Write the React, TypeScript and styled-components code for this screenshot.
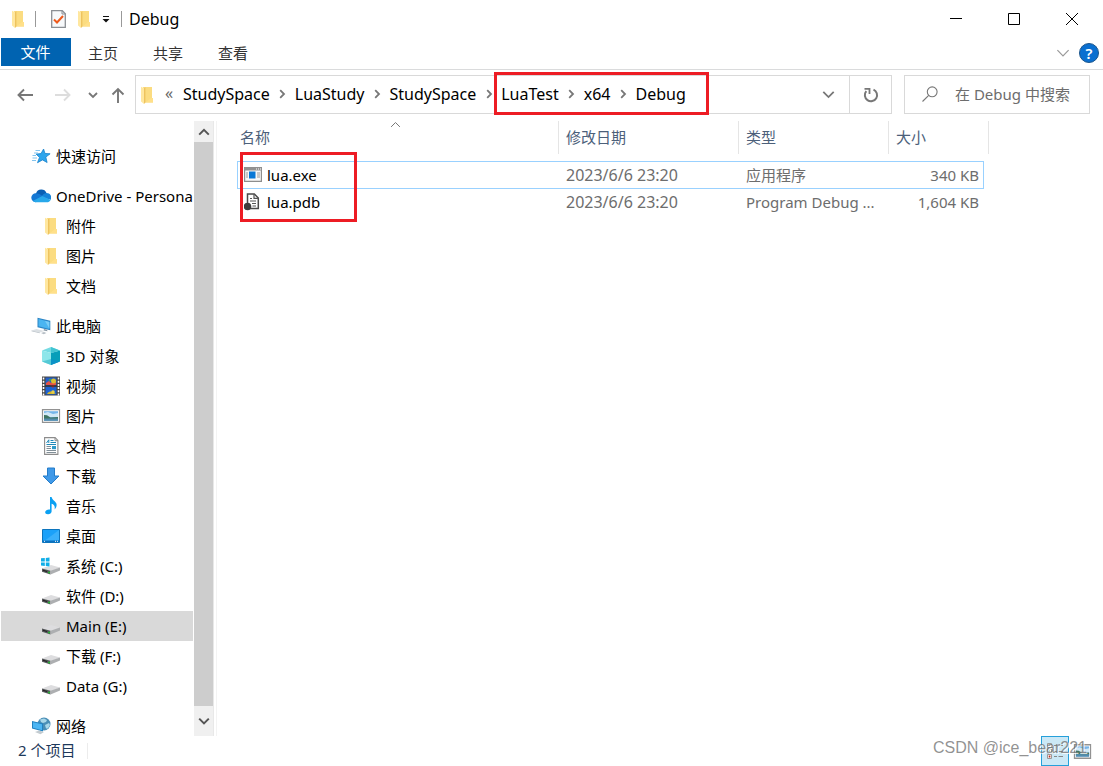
import React from 'react';
import styled, { createGlobalStyle } from 'styled-components';

const GlobalStyle = createGlobalStyle`
  *, *::before, *::after { box-sizing: border-box; }
  body {
    margin: 0;
    background: #fff;
    color: #000;
    font-family: "Noto Sans", "Noto Sans CJK SC", sans-serif;
    font-size: 15px;
    line-height: 20px;
  }
  button, input { font: inherit; color: inherit; }
  svg { display: block; flex: none; }
`;

/* ---------- icons ---------- */

const FolderIcon = () => (
  <svg width="12" height="18" viewBox="0 0 12 18" aria-hidden="true">
    <path d="M2 1h9v13h1v2.5H4z" fill="#fbdc81" />
    <path d="M10 12h2v4.5H4.500z" fill="#ffe08a" />
    <path d="M0 .8l3 1.400V18L0 15.600z" fill="#ffe79f" />
    <path d="M3 2.200L4.400 1v15.500L3 18z" fill="#eec35f" />
  </svg>
);

const CheckDocIcon = () => (
  <svg width="15" height="18" viewBox="0 0 15 18" aria-hidden="true">
    <path d="M.7.700h10.600l3 3v13.600H.7z" fill="#f7f9fb" stroke="#8b8f94" strokeWidth="1.300" />
    <path d="M11 1v3h3.500" fill="none" stroke="#8b8f94" />
    <path d="M3 9.500l3 3 6-6.500" fill="none" stroke="#ee5a1c" strokeWidth="2" />
  </svg>
);

const QuickMenuIcon = () => (
  <svg width="8" height="8" viewBox="0 0 8 8" aria-hidden="true">
    <path d="M1 1h6v1H1zM.5 4h7L4 7.500z" fill="#111" />
  </svg>
);

const MinimizeIcon = () => (
  <svg width="12" height="12" viewBox="0 0 12 12" aria-hidden="true"><path d="M0 5.500h12" stroke="#000" /></svg>
);
const MaximizeIcon = () => (
  <svg width="12" height="12" viewBox="0 0 12 12" aria-hidden="true"><path d="M.5.500h11v11H.5z" fill="none" stroke="#000" /></svg>
);
const CloseIcon = () => (
  <svg width="12" height="12" viewBox="0 0 12 12" aria-hidden="true"><path d="M0 0l12 12M12 0L0 12" stroke="#000" /></svg>
);

const Chevron = ({ dir, size = 10, color = '#777', weight = 1.8 }: { dir: 'up' | 'down' | 'right'; size?: number; color?: string; weight?: number }) => {
  const paths = { up: 'M1 7.200L5 3.200l4 4', down: 'M1 3l4 4 4-4', right: 'M3.200 1.200L7 5 3.200 8.800' };
  return (
    <svg width={size} height={size} viewBox="0 0 10 10" aria-hidden="true">
      <path d={paths[dir]} fill="none" stroke={color} strokeWidth={weight * 10 / size} />
    </svg>
  );
};

const ArrowIcon = ({ dir, color }: { dir: 'left' | 'right' | 'up'; color: string }) => {
  const paths = {
    left: 'M16 8H1.500M7 2.500L1.500 8 7 13.500',
    right: 'M0 8h14.500M9 2.500L14.500 8 9 13.500',
    up: 'M8 16V2M2.500 7.500L8 2l5.500 5.500',
  };
  return (
    <svg width="16" height="16" viewBox="0 0 16 16" aria-hidden="true">
      <path d={paths[dir]} fill="none" stroke={color} strokeWidth="1.900" />
    </svg>
  );
};

const RefreshIcon = () => (
  <svg width="16" height="16" viewBox="0 0 16 16" aria-hidden="true">
    <path d="M10.500 2.600A6.100 6.100 0 1 1 3.300 4.200" fill="none" stroke="#777" strokeWidth="2" />
    <path d="M1.500 1.900h5v5" fill="none" stroke="#777" strokeWidth="1.800" />
  </svg>
);

const SearchIcon = () => (
  <svg width="16" height="16" viewBox="0 0 16 16" aria-hidden="true">
    <circle cx="10.200" cy="5.800" r="4.900" fill="none" stroke="#777" strokeWidth="1.100" />
    <path d="M6.700 9.300L.5 15.500" stroke="#777" strokeWidth="1.100" />
  </svg>
);

const StarIcon = () => (
  <svg width="20" height="16" viewBox="0 0 20 16" aria-hidden="true">
    <path d="M12.600 1l1.300 4.400 5.200.4-4.300 3.300 1.300 5.400-4.600-2.600-5 2.800 2-5.300-3.400-3.300 4.900-.5z" fill="#2fa5ec" stroke="#1781cc" strokeWidth=".8" />
    <path d="M4.500 2.500h4.500M3 5h4M1.500 7.500h3.500M1.500 10h4.500M1 12.500h4" stroke="#75bdec" strokeWidth=".9" />
  </svg>
);

const OneDriveIcon = () => (
  <svg width="20" height="14" viewBox="0 0 20 14" aria-hidden="true">
    <path d="M5 4.500A5.600 5.600 0 0 1 15.500 4l-3 5-8-4z" fill="#0a5fb4" />
    <path d="M4.700 13.200A4.500 4.500 0 0 1 4.900 4.200c2.300 0 4 1 6.600 2.800L5 13.200z" fill="#1478d4" />
    <path d="M11 6.800c1.600-2 3-2.900 4.700-2.800a4.600 4.600 0 0 1 4 6.800L13 9z" fill="#1683d8" />
    <path d="M1.800 12.100L11.300 7l8.300 3.900c-.8 1.500-2.100 2.300-3.800 2.300h-11c-1.200 0-2.200-.4-3-1.100z" fill="#28a8ea" />
  </svg>
);

const ComputerIcon = () => (
  <svg width="20" height="18" viewBox="0 0 20 18" aria-hidden="true">
    <path d="M6.500.800l12.800 3v9.400l-12.800-3z" fill="#2b84c4" />
    <path d="M7.500 2.100l10.900 2.600v7.200L7.500 9.300z" fill="#4bb5f1" />
    <path d="M14 3.900l4.400 1v6.500z" fill="#7bcdf7" />
    <path d="M13 12l3 .7.500 1.500-4-.7z" fill="#8998a5" />
    <path d="M.5 13.500l5-1.500 8 2-4.700 1.500z" fill="#dbe0e4" />
    <path d="M.5 13.500l8.300 2v.8L.5 14.300zM10 16l3-1 2.500.9-2.800 1.300z" fill="#b7bfc6" />
  </svg>
);

const CubeIcon = () => (
  <svg width="20" height="18" viewBox="0 0 20 18" aria-hidden="true">
    <path d="M1 3.500L10 0l9 3.500L10 6z" fill="#75dbe3" />
    <path d="M1 3.500L10 6v12l-9-3.500z" fill="#8ee6ea" />
    <path d="M10 6l9-2.500v11L10 18z" fill="#079eb9" />
    <path d="M10 0l9 3.500L10 6z" fill="#42c4d2" />
    <path d="M1 14.500L10 12v6z" fill="#55c9d5" />
    <path d="M10 12l9 2.500-9 3.500z" fill="#0b92c7" />
  </svg>
);

const FilmIcon = () => (
  <svg width="20" height="20" viewBox="0 0 20 20" aria-hidden="true">
    <path d="M1 .5h18v19H1z" fill="#454545" />
    <path d="M4.500 1.500h11v8h-11z" fill="#2460c5" />
    <path d="M4.500 10.500h11v8h-11z" fill="#1c62d3" />
    <path d="M5 7l3-2 2 2 5-1v3H5z" fill="#e65245" />
    <circle cx="12.500" cy="5" r="2.500" fill="#d9be31" />
    <path d="M9 9l5 0-2 3z" fill="#bd342b" />
    <path d="M6 18c1-2 3-3 5-2l4 2z" fill="#d4b72f" />
    <circle cx="12" cy="16" r="1.800" fill="#e9cf45" />
    <path d="M8 3h2v2H8z" fill="#38a256" />
    <path d="M4 10h12" stroke="#282828" />
    <path d="M2.500 1.500v18M17.500 1.500v18" stroke="#fff" strokeWidth="1.600" strokeDasharray="2 1.200" />
  </svg>
);

const PictureIcon = ({ width = 20, height = 14 }: { width?: number; height?: number }) => (
  <svg width={width} height={height} viewBox="0 0 20 14" preserveAspectRatio="none" aria-hidden="true">
    <path d="M1.500.700h17v12.600h-17z" fill="#fff" stroke="#929292" strokeWidth="1.200" />
    <path d="M3 2.200h14v9.600H3z" fill="#75b5e9" />
    <path d="M3 4l4-1 5 2 5-1v4H3z" fill="#d0e8f7" />
    <path d="M3 6l3 .3 3.500 2.200L17 8v2H3z" fill="#3f7563" />
    <path d="M3 9.500h14v2.300H3z" fill="#548cac" />
  </svg>
);

const DocumentIcon = () => (
  <svg width="20" height="18" viewBox="0 0 20 18" aria-hidden="true">
    <path d="M3.600.600h10.500l2.800 2.800v14H3.600z" fill="#fff" stroke="#8c8c8c" strokeWidth="1.100" />
    <path d="M14 .8v2.900h2.800" fill="none" stroke="#8c8c8c" />
    <path d="M5.500 6l2.300-3.200V6M9.500 3.500h3M9.500 5.500h5.500M5.500 7.500H15" fill="none" stroke="#2089b9" />
    <path d="M5.500 9.500H10M5.500 11.500H10M5.500 13.500H15M5.500 15.500H15" stroke="#818f98" />
    <path d="M11 9h4v3.200h-4z" fill="#2f9ac9" />
  </svg>
);

const DownloadIcon = () => (
  <svg width="20" height="18" viewBox="0 0 20 18" aria-hidden="true">
    <path d="M6.500 1h7v8H18l-8 8-8-8h4.500z" fill="#3f99e8" stroke="#247cc9" />
  </svg>
);

const MusicIcon = () => (
  <svg width="20" height="18" viewBox="0 0 20 18" aria-hidden="true">
    <path d="M9 0h1.600c.4 3 4.600 4.500 5 7.400.2 2-.7 3.700-2 5 .6-3-.4-4.800-3-5.600v7.700c0 1.700-2 3-3.800 2.800C5 17.200 4 16.300 4.200 15c.3-1.700 2.600-3 4.800-2.400z" fill="#0ba0f2" />
  </svg>
);

const DesktopIcon = () => (
  <svg width="20" height="14" viewBox="0 0 20 14" aria-hidden="true">
    <path d="M1.500.500h17v13h-17z" fill="#1ba1f9" stroke="#0d75bd" />
    <path d="M2 13l16-12v10z" fill="#3ab0fb" />
    <path d="M2 11.500h16V13H2z" fill="#0b70c0" />
    <path d="M3 12.300h1M14 12.300h1M16 12.300h1" stroke="#fff" />
  </svg>
);

const DriveIcon = ({ system = false }: { system?: boolean }) => (
  <svg width="20" height="18" viewBox="0 0 20 18" aria-hidden="true">
    <path d="M1 11.500l9-3.500 9 2.500-9 4z" fill="#dddddf" />
    <path d="M1 11.500l8.500 2.300V17.500L1 14.800z" fill="#55585a" />
    <path d="M9.500 13.800L19 10.500v3l-9.500 4z" fill="#adafb1" />
    <path d="M2 13.300l4 1.200" stroke="#222" strokeWidth="1.200" />
    <path d="M7 15.500h2" stroke="#26b735" strokeWidth="1.300" />
    {system && (
      <g>
        <path d="M0 0h9v9.500H0z" fill="#fff" />
        <path d="M0 1.300L3.800 1v3.500H0zM4.800.900L8.500.500v4H4.800zM0 5.400h3.800V9L0 8.600zM4.800 5.400h3.700v4l-3.700-.4z" fill="#10aee8" />
      </g>
    )}
  </svg>
);

const NetworkIcon = () => (
  <svg width="20" height="18" viewBox="0 0 20 18" aria-hidden="true">
    <circle cx="13" cy="7" r="6.500" fill="#498eb6" />
    <path d="M9 2.500l4-1 3 1.500-1 2-3 1-2-1zM14 8l4-2 1 2-2 3.500h-2z" fill="#a8d7e9" />
    <path d="M1 4l11 2.500v8L1 11.500z" fill="#2181c0" />
    <path d="M2 5.300l9 2v5.900l-9-2.400z" fill="#4bb5f3" />
    <path d="M4 15l4-1.500 5 1.500-3.500 2.300z" fill="#c3cbd0" />
  </svg>
);

const AppFileIcon = () => (
  <svg width="18" height="15" viewBox="0 0 18 15" aria-hidden="true">
    <path d="M.6.600h16.800v13.800H.6z" fill="#f8f8f8" stroke="#8d8d8d" strokeWidth="1.200" />
    <path d="M.5.500h17v3H.5z" fill="#929292" />
    <path d="M12 2h1M14 2h1M16 2h1" stroke="#fff" />
    <path d="M5 4.500h6.500v7H5z" fill="#0878d6" />
    <path d="M2 6h2M2 8h2M2 10h2M13 6h3M13 8h3M13 10h3" stroke="#999" />
  </svg>
);

const DebugFileIcon = () => (
  <svg width="18" height="18" viewBox="0 0 18 18" aria-hidden="true">
    <path d="M3.500 1h6.800l4 4v10.500H3.500z" fill="#fff" stroke="#4a4a4a" strokeWidth="1.500" />
    <path d="M10 1v4.300h4.300M6 8h6M8 10.500h4M8.500 13h3.500M6 5.500h2" fill="none" stroke="#555" strokeWidth="1.200" />
    <circle cx="3.500" cy="13.500" r="3.800" fill="#3e3e3e" />
  </svg>
);

const DetailsViewIcon = () => (
  <svg width="18" height="18" viewBox="0 0 18 18" aria-hidden="true">
    <path d="M1.500 1.500h4v4h-4zM1.500 7h4v4h-4zM1.500 12.500h4v4h-4z" fill="#fff" stroke="#999" />
    <path d="M3 3h1v1H3z" fill="#328ac6" />
    <path d="M3 8.500h1v1H3z" fill="#4b8f5c" />
    <path d="M2.700 13.500h1.700v2H2.700z" fill="#c02f20" />
    <path d="M8 3.500h3M12.500 3.500H17M8 9.500h3M12.500 9.500H17M8 14.500h3M12.500 14.500H17" stroke="#888" />
  </svg>
);

/* ---------- window chrome ---------- */

const Window = styled.div`
  display: flex;
  flex-direction: column;
  height: 100vh;
  overflow: hidden;
  position: relative;
`;

const TitleBar = styled.header`
  display: flex;
  align-items: center;
  height: 38px;
  padding-left: 12px;
`;

const QuickAccess = styled.div`
  display: flex;
  align-items: center;
  gap: 12px;
  padding-left: 4px;
`;

const Divider = styled.span<{ $pale?: boolean }>`
  width: 1px;
  height: 16px;
  margin: 0 ${p => (p.$pale ? 0 : 11)}px;
  background: ${p => (p.$pale ? '#ececec' : '#999')};
`;

const IconButton = styled.button<{ $w?: number }>`
  display: flex;
  align-items: center;
  justify-content: center;
  flex: none;
  width: ${p => (p.$w ? `${p.$w}px` : 'auto')};
  align-self: stretch;
  padding: 0;
  border: 0;
  background: none;
`;

const Title = styled.h1`
  margin: 0 0 0 -4px;
  font-size: 16px;
  font-weight: 400;
`;

const WindowButtons = styled.div`
  display: flex;
  align-self: stretch;
  margin-left: auto;
  padding-right: 2px;
`;

const TabBar = styled.nav`
  display: flex;
  height: 32px;
  padding: 0 4px 0 1px;
  border-bottom: 1px solid #dadbdc;
`;

const Tab = styled.button<{ $active?: boolean }>`
  width: ${p => (p.$active ? 70 : 65)}px;
  height: ${p => (p.$active ? 28 : 30)}px;
  padding: 0 1px 0 0;
  border: 0;
  background: ${p => (p.$active ? '#0063b1' : 'none')};
  color: ${p => (p.$active ? '#fff' : '#333')};
`;

const RibbonTools = styled.div`
  display: flex;
  gap: 9px;
  height: 30px;
  margin-left: auto;
`;

const HelpButton = styled.button`
  align-self: center;
  width: 20px;
  height: 20px;
  padding: 0;
  border: 1px solid #1c568c;
  border-radius: 50%;
  background: #0a6fd0;
  color: #fff;
  font-weight: 600;
  line-height: 16px;
`;

/* ---------- address row ---------- */

const AddressRow = styled.div`
  display: flex;
  height: 39px;
  margin: 5px 13px 7px 0;
`;

const HistoryNav = styled.div`
  display: flex;
  width: 135px;
  padding: 0 8px 0 9px;
`;

const AddressBox = styled.div`
  display: flex;
  align-items: center;
  flex: 1;
  min-width: 0;
  border: 1px solid #d9d9d9;
  padding-left: 5px;
`;

const Overflow = styled.span`
  width: 30px;
  padding: 0 0 4px 2px;
  color: #666;
  font-size: 16px;
  text-align: center;
`;

const Crumbs = styled.div`
  display: flex;
  align-items: center;
  flex: none;
  padding-bottom: 2px;
  font-size: 16px;
`;

const MarkedCrumbs = styled(Crumbs)`
  position: relative;
`;

const Crumb = styled.a`
  color: #000;
  text-decoration: none;
`;

const CrumbArrow = styled.span`
  display: flex;
  justify-content: center;
  width: 25px;
`;

const RefreshCell = styled.div`
  display: flex;
  align-self: stretch;
  border-left: 1px solid #d9d9d9;
`;

const Spacer = styled.div`
  flex: 1;
`;

const SearchBox = styled.label`
  display: flex;
  align-items: center;
  gap: 17px;
  width: 186px;
  margin-left: 12px;
  padding: 0 0 2px 17px;
  border: 1px solid #d9d9d9;
`;

const SearchInput = styled.input`
  flex: 1;
  min-width: 0;
  padding: 0;
  border: 0;
  outline: 0;
  background: none;
  &::placeholder { color: #6d6d6d; opacity: 1; }
`;

const CrumbMark = styled.span`
  position: absolute;
  inset: -12px -23px -9px -7px;
  border: 3px solid #ed1c24;
  pointer-events: none;
`;

/* ---------- body ---------- */

const Body = styled.div`
  display: flex;
  flex: 1;
  min-height: 0;
`;

const Sidebar = styled.nav`
  display: flex;
  flex-direction: column;
  gap: 10px;
  width: 194px;
  padding: 20px 1px 0;
  overflow: hidden;
`;

const TreeGroup = styled.div`
  flex: none;
`;

const TreeItem = styled.a<{ $child?: boolean; $selected?: boolean }>`
  display: flex;
  align-items: center;
  gap: 5px;
  height: 30px;
  padding-left: ${p => (p.$child ? 40 : 30)}px;
  background: ${p => (p.$selected ? '#d9d9d9' : 'none')};
  color: #000;
  text-decoration: none;
  white-space: nowrap;
`;

const TreeIcon = styled.span`
  display: flex;
  justify-content: center;
  flex: none;
  width: 20px;
`;

const ScrollTrack = styled.div`
  display: flex;
  flex-direction: column;
  flex: none;
  width: 20px;
  border-right: 1px solid #e8e8e8;
  background: #f0f0f0;
`;

const ScrollButton = styled.button<{ $h: number }>`
  display: flex;
  justify-content: center;
  align-items: center;
  height: ${p => p.$h}px;
  padding: 0;
  border: 0;
  background: #f0f0f0;
`;

const ScrollThumb = styled.div`
  flex: 1;
  background: #cdcdcd;
`;

const Main = styled.main`
  flex: 1;
  min-width: 0;
  margin-left: 2px;
  padding-left: 20px;
  border-left: 1px solid #f3f3f3;
`;

const TableArea = styled.div`
  position: relative;
  width: 752px;
`;

const FileTable = styled.table`
  width: 100%;
  table-layout: fixed;
  border-collapse: separate;
  border-spacing: 0;
`;

const HeadCell = styled.th<{ $w: number; $first?: boolean }>`
  position: relative;
  width: ${p => p.$w}px;
  height: 33px;
  padding: 0 0 2px ${p => (p.$first ? 3 : 7)}px;
  border-right: 1px solid #e5e5e5;
  color: #4c607a;
  font-weight: 400;
  text-align: left;
`;

const SortMark = styled.span`
  position: absolute;
  top: -2px;
  left: 153px;
`;

const Gap = styled.tbody`
  td { height: 7px; padding: 0; }
`;

const FileRow = styled.tr<{ $focused?: boolean }>`
  position: relative;
  &::after {
    content: "";
    position: absolute;
    inset: 0 5px -1px 0;
    border: ${p => (p.$focused ? '1px solid #99d1ff' : '0')};
    pointer-events: none;
  }
`;

const Cell = styled.td<{ $right?: boolean; $numeric?: boolean }>`
  height: 27px;
  padding: 0 ${p => (p.$right ? 10 : 0)}px 0 7px;
  color: #6d6d6d;
  font-size: ${p => (p.$numeric ? 16 : 15)}px;
  text-align: ${p => (p.$right ? 'right' : 'left')};
  white-space: nowrap;
`;

const FileName = styled.span`
  display: flex;
  align-items: center;
  gap: 5px;
  color: #000;
`;

const FileMark = styled.span`
  position: absolute;
  top: 31px;
  left: 3px;
  width: 117px;
  height: 70px;
  border: 3px solid #ed1c24;
  pointer-events: none;
`;

/* ---------- status bar ---------- */

const StatusBar = styled.footer`
  display: flex;
  align-items: center;
  gap: 12px;
  height: 30px;
  padding: 0 11px 0 18px;
  color: #1e395b;
`;

const ItemCount = styled.span`
  padding-bottom: 2px;
`;

const ViewButtons = styled.div`
  display: flex;
  align-items: center;
  align-self: stretch;
  gap: 4px;
  margin-left: auto;
`;

const ViewButton = styled.button<{ $on?: boolean }>`
  display: flex;
  align-items: center;
  justify-content: center;
  width: ${p => (p.$on ? 28 : 19)}px;
  height: 30px;
  padding: 0;
  border: ${p => (p.$on ? '1px solid #26a0da' : '0')};
  background: ${p => (p.$on ? '#cbe8f6' : 'none')};
`;

const Watermark = styled.span`
  position: absolute;
  right: 16px;
  bottom: 8px;
  color: rgba(110, 110, 110, 0.75);
  font-family: "Liberation Sans", sans-serif;
  font-size: 16px;
  text-shadow: 1px 1px 0 rgba(255, 255, 255, 0.8);
  pointer-events: none;
`;

/* ---------- data ---------- */

type Node = { label: string; icon: React.ReactNode; selected?: boolean };

const tree: { root: Node; children: Node[] }[] = [
  { root: { label: '快速访问', icon: <StarIcon /> }, children: [] },
  {
    root: { label: 'OneDrive - Persona', icon: <OneDriveIcon /> },
    children: [
      { label: '附件', icon: <FolderIcon /> },
      { label: '图片', icon: <FolderIcon /> },
      { label: '文档', icon: <FolderIcon /> },
    ],
  },
  {
    root: { label: '此电脑', icon: <ComputerIcon /> },
    children: [
      { label: '3D 对象', icon: <CubeIcon /> },
      { label: '视频', icon: <FilmIcon /> },
      { label: '图片', icon: <PictureIcon /> },
      { label: '文档', icon: <DocumentIcon /> },
      { label: '下载', icon: <DownloadIcon /> },
      { label: '音乐', icon: <MusicIcon /> },
      { label: '桌面', icon: <DesktopIcon /> },
      { label: '系统 (C:)', icon: <DriveIcon system /> },
      { label: '软件 (D:)', icon: <DriveIcon /> },
      { label: 'Main (E:)', icon: <DriveIcon />, selected: true },
      { label: '下载 (F:)', icon: <DriveIcon /> },
      { label: 'Data (G:)', icon: <DriveIcon /> },
    ],
  },
  { root: { label: '网络', icon: <NetworkIcon /> }, children: [] },
];

const files = [
  { name: 'lua.exe', icon: <AppFileIcon />, date: '2023/6/6 23:20', type: '应用程序', size: '340 KB', focused: true },
  { name: 'lua.pdb', icon: <DebugFileIcon />, date: '2023/6/6 23:20', type: 'Program Debug ...', size: '1,604 KB', focused: false },
];

const parentFolders = ['StudySpace', 'LuaStudy', 'StudySpace'];
const markedFolders = ['LuaTest', 'x64', 'Debug'];

export default function App() {
  return (
    <Window>
      <GlobalStyle />
      <TitleBar>
        <FolderIcon />
        <Divider />
        <QuickAccess>
          <IconButton aria-label="属性" $w={15}><CheckDocIcon /></IconButton>
          <IconButton aria-label="新建文件夹" $w={12}><FolderIcon /></IconButton>
          <IconButton aria-label="自定义快速访问工具栏" $w={8}><QuickMenuIcon /></IconButton>
        </QuickAccess>
        <Divider />
        <Title>Debug</Title>
        <WindowButtons>
          <IconButton aria-label="最小化" $w={58}><MinimizeIcon /></IconButton>
          <IconButton aria-label="最大化" $w={58}><MaximizeIcon /></IconButton>
          <IconButton aria-label="关闭" $w={58}><CloseIcon /></IconButton>
        </WindowButtons>
      </TitleBar>

      <TabBar>
        <Tab $active>文件</Tab>
        <Tab>主页</Tab>
        <Tab>共享</Tab>
        <Tab>查看</Tab>
        <RibbonTools>
          <IconButton aria-label="展开功能区"><Chevron dir="down" size={14} color="#999" weight={1.2} /></IconButton>
          <HelpButton aria-label="帮助">?</HelpButton>
        </RibbonTools>
      </TabBar>

      <AddressRow>
        <HistoryNav>
          <IconButton aria-label="后退" $w={32}><ArrowIcon dir="left" color="#777" /></IconButton>
          <IconButton aria-label="前进" $w={44}><ArrowIcon dir="right" color="#ddd" /></IconButton>
          <IconButton aria-label="最近位置" $w={16}><Chevron dir="down" /></IconButton>
          <IconButton aria-label="上移" $w={34}><ArrowIcon dir="up" color="#777" /></IconButton>
        </HistoryNav>
        <AddressBox>
          <FolderIcon />
          <Overflow>«</Overflow>
          <Crumbs>
            {parentFolders.map((name, i) => (
              <React.Fragment key={i}>
                <Crumb href="#">{name}</Crumb>
                <CrumbArrow><Chevron dir="right" /></CrumbArrow>
              </React.Fragment>
            ))}
          </Crumbs>
          <MarkedCrumbs>
            {markedFolders.map((name, i) => (
              <React.Fragment key={name}>
                {i > 0 && <CrumbArrow><Chevron dir="right" /></CrumbArrow>}
                <Crumb href="#">{name}</Crumb>
              </React.Fragment>
            ))}
            <CrumbMark />
          </MarkedCrumbs>
          <Spacer />
          <IconButton aria-label="以前的位置" $w={41}><Chevron dir="down" size={13} /></IconButton>
          <RefreshCell>
            <IconButton aria-label="刷新" $w={41}><RefreshIcon /></IconButton>
          </RefreshCell>
        </AddressBox>
        <SearchBox>
          <SearchIcon />
          <SearchInput type="text" aria-label="搜索" placeholder="在 Debug 中搜索" />
        </SearchBox>
      </AddressRow>

      <Body>
        <Sidebar>
          {tree.map(({ root, children }) => (
            <TreeGroup key={root.label}>
              <TreeItem href="#"><TreeIcon>{root.icon}</TreeIcon>{root.label}</TreeItem>
              {children.map(node => (
                <TreeItem href="#" key={node.label} $child $selected={node.selected}>
                  <TreeIcon>{node.icon}</TreeIcon>{node.label}
                </TreeItem>
              ))}
            </TreeGroup>
          ))}
        </Sidebar>
        <ScrollTrack>
          <ScrollButton aria-label="向上滚动" $h={21}><Chevron dir="up" size={12} color="#555" weight={2} /></ScrollButton>
          <ScrollThumb />
          <ScrollButton aria-label="向下滚动" $h={30}><Chevron dir="down" size={12} color="#555" weight={2} /></ScrollButton>
        </ScrollTrack>
        <Main>
          <TableArea>
            <FileTable>
              <thead>
                <tr>
                  <HeadCell $w={322} $first>名称<SortMark><Chevron dir="up" size={11} color="#777" weight={1} /></SortMark></HeadCell>
                  <HeadCell $w={180}>修改日期</HeadCell>
                  <HeadCell $w={150}>类型</HeadCell>
                  <HeadCell $w={100}>大小</HeadCell>
                </tr>
              </thead>
              <Gap aria-hidden="true"><tr><td colSpan={4} /></tr></Gap>
              <tbody>
                {files.map(file => (
                  <FileRow key={file.name} $focused={file.focused}>
                    <Cell><FileName>{file.icon}{file.name}</FileName></Cell>
                    <Cell $numeric>{file.date}</Cell>
                    <Cell>{file.type}</Cell>
                    <Cell $right>{file.size}</Cell>
                  </FileRow>
                ))}
              </tbody>
            </FileTable>
            <FileMark />
          </TableArea>
        </Main>
      </Body>

      <StatusBar>
        <ItemCount>2 个项目</ItemCount>
        <Divider $pale />
        <ViewButtons>
          <ViewButton $on aria-label="详细信息"><DetailsViewIcon /></ViewButton>
          <ViewButton aria-label="大缩略图"><PictureIcon width={19} height={15} /></ViewButton>
        </ViewButtons>
      </StatusBar>
      <Watermark>CSDN @ice_bear221</Watermark>
    </Window>
  );
}
